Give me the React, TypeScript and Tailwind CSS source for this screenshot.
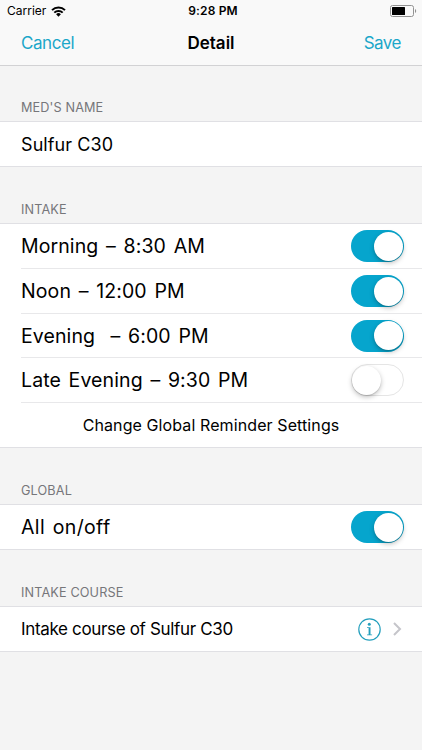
import React from "react";

function Toggle({ on = false }: { on?: boolean }) {
  return (
    <span
      role="switch"
      aria-checked={on}
      className={
        "flex h-[32px] w-[53px] shrink-0 items-center rounded-full " +
        (on ? "justify-end bg-[#06a5cd] pr-[1.5px]" : "justify-start border-[1.5px] border-[#e5e5e5] bg-white")
      }
    >
      <span className="size-[29px] rounded-full bg-white shadow-[0_2px_5px_rgba(0,0,0,0.25),0_1px_1px_rgba(0,0,0,0.12)]" />
    </span>
  );
}

function SectionTitle({ children, first = false }: { children: React.ReactNode; first?: boolean }) {
  return (
    <h2
      className={
        "flex items-end pb-[5px] pl-[21px] text-[12.7px] leading-[17px] tracking-[0.12px] text-[#76767a] " +
        (first ? "h-[55px]" : "h-[56px]")
      }
    >
      {children}
    </h2>
  );
}

function Group({ children }: { children: React.ReactNode }) {
  return <div className="border-y border-[#e0e0e4] bg-white pl-[21px] text-black">{children}</div>;
}

const intakes = [
  { label: "Morning – 8:30 AM", on: true, cls: "h-[45px]" },
  { label: "Noon – 12:00 PM", on: true, cls: "h-[45px]" },
  { label: "Evening  – 6:00 PM", on: true, cls: "h-[44px]" },
  { label: "Late Evening – 9:30 PM", on: false, cls: "h-[45px]" },
];

export default function App() {
  return (
    <div className="h-[750px] w-[422px] overflow-hidden bg-[#f4f4f4] font-['Inter',sans-serif]">
      <header className="h-[66px] border-b border-[#d2d2d4] bg-[#f9f9f9] text-black">
        <div className="grid h-[22px] grid-cols-3 items-center pr-[5px] pl-[7px] text-[12px]">
          <div className="flex items-center gap-[5px]">
            <span>Carrier</span>
            <svg width="15" height="11" viewBox="0 0 15 11" fill="none" stroke="#000" strokeWidth="2">
              <path d="M1 4.1a9.3 9.3 0 0 1 13 0M3.3 6.6a6 6 0 0 1 8.4 0" />
              <path d="M7.5 10.7 5.1 8.3a3.4 3.4 0 0 1 4.8 0Z" fill="#000" stroke="none" />
            </svg>
          </div>
          <span className="pl-[2px] text-center font-semibold tracking-[0.15px]">9:28 PM</span>
          <svg className="justify-self-end" width="27" height="12" viewBox="0 0 27 12">
            <rect x=".5" y=".5" width="23" height="11" rx="2" fill="none" stroke="#929292" />
            <rect x="2" y="2" width="13" height="8" rx=".5" />
            <path d="M25 4v4c1.6-.6 1.6-3.4 0-4Z" fill="#929292" />
          </svg>
        </div>
        <div className="grid h-[43px] grid-cols-3 items-center px-[21px] text-[17px]">
          <button className="text-left tracking-[-0.42px] text-[#1ba7c9]">Cancel</button>
          <h1 className="text-center font-semibold">Detail</h1>
          <button className="text-right tracking-[-0.5px] text-[#1ba7c9]">Save</button>
        </div>
      </header>

      <section>
        <SectionTitle first>MED'S NAME</SectionTitle>
        <Group>
          <div className="flex h-[44px] items-center text-[18px] font-[380] tracking-[0.08px]">Sulfur C30</div>
        </Group>
      </section>

      <section>
        <SectionTitle>INTAKE</SectionTitle>
        <Group>
          {intakes.map((item) => (
            <div
              key={item.label}
              className={
                "flex items-center justify-between border-b border-[#e8e8ea] pr-[18px] text-[19.5px] font-[380] tracking-[0.1px] [word-spacing:2.1px] " +
                item.cls
              }
            >
              <span className="pt-[2px] whitespace-pre">{item.label}</span>
              <Toggle on={item.on} />
            </div>
          ))}
          <div className="flex h-[44px] items-center justify-center pr-[21px] text-[16px] font-[380] tracking-[0.1px]">
            Change Global Reminder Settings
          </div>
        </Group>
      </section>

      <section>
        <SectionTitle>GLOBAL</SectionTitle>
        <Group>
          <div className="flex h-[44px] items-center justify-between pr-[18px] text-[19.5px] font-[380]">
            <span className="pt-[2px] tracking-[0.35px] [word-spacing:2px]">All on/off</span>
            <Toggle on />
          </div>
        </Group>
      </section>

      <section>
        <SectionTitle>INTAKE COURSE</SectionTitle>
        <Group>
          <div className="flex h-[44px] items-center pr-[20px] text-[17px]">
            <span className="flex-1 pt-[2px] tracking-[-0.34px]">Intake course of Sulfur C30</span>
            <svg width="23" height="23" viewBox="0 0 23 23" fill="#249fbd">
              <circle cx="11.5" cy="11.5" r="10.7" fill="none" stroke="#249fbd" strokeWidth="1.2" />
              <circle cx="11.3" cy="6.3" r="1.5" />
              <path d="M9 9.2h3.5v7.3h1.6v.8H9v-.8h1.6V10H9Z" />
            </svg>
            <svg className="ml-[12px]" width="9" height="14" viewBox="0 0 9 14" fill="none" stroke="#c5c5ca" strokeWidth="2">
              <path d="m1 1 6 6-6 6" />
            </svg>
          </div>
        </Group>
      </section>
    </div>
  );
}
